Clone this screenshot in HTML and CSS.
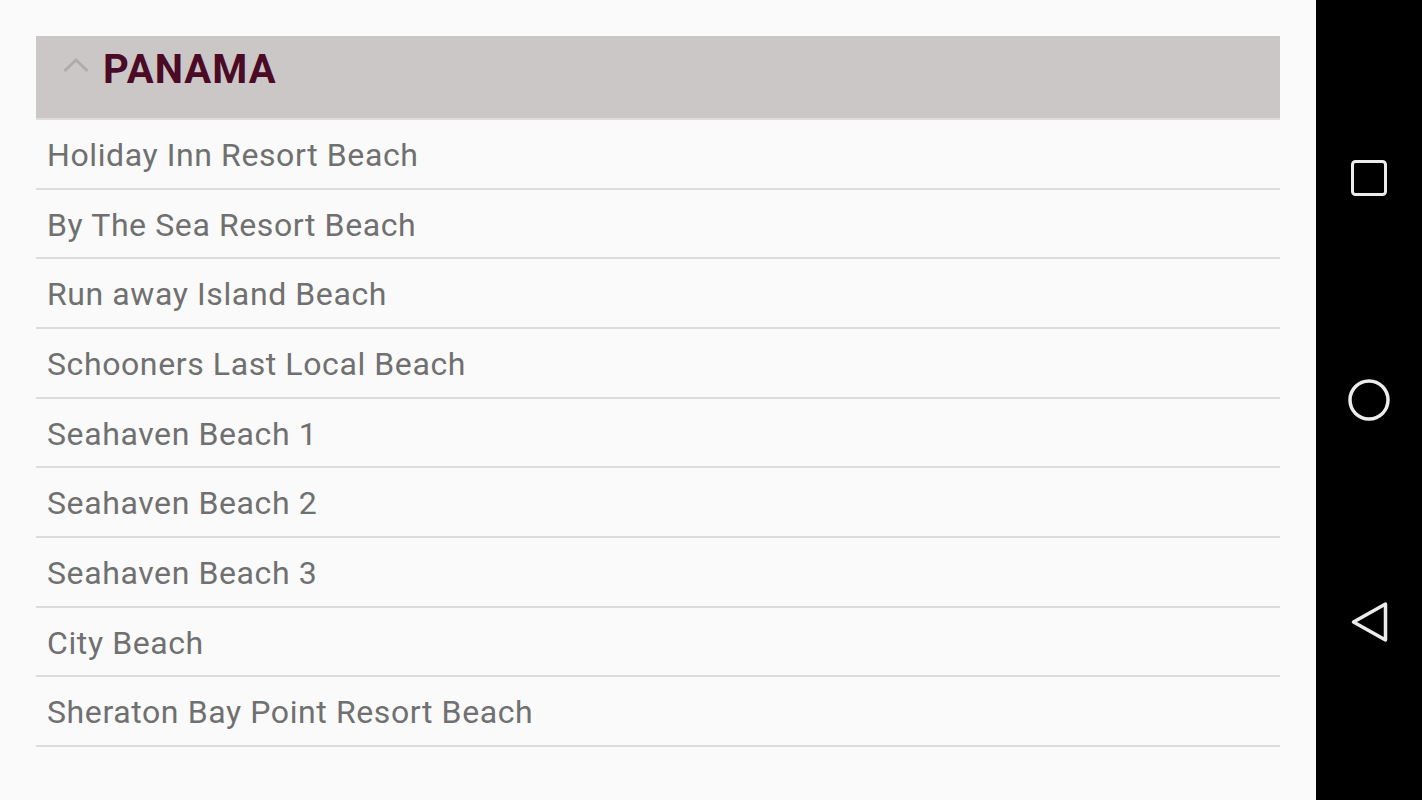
FILE: index.html
```html
<!DOCTYPE html>
<html>
<head>
<meta charset="utf-8">
<link rel="stylesheet" href="styles.css">
</head>
<body>
<div class="screen">
  <main class="content">
    <div class="group-header">
      <svg class="chevron" width="26" height="16" viewBox="0 0 26 16"><polyline points="1.5,14 13,3 24.5,14" fill="none" stroke="#afabaa" stroke-width="3"/></svg>
      <span class="group-title">PANAMA</span>
    </div>
    <ul class="list">
      <li class="row">Holiday Inn Resort Beach</li>
      <li class="row">By The Sea Resort Beach</li>
      <li class="row">Run away Island Beach</li>
      <li class="row">Schooners Last Local Beach</li>
      <li class="row">Seahaven Beach 1</li>
      <li class="row">Seahaven Beach 2</li>
      <li class="row">Seahaven Beach 3</li>
      <li class="row">City Beach</li>
      <li class="row">Sheraton Bay Point Resort Beach</li>
    </ul>
  </main>
  <nav class="navbar">
    <div class="nav-btn"><svg width="48" height="48" viewBox="0 0 48 48"><rect x="7.5" y="7.5" width="33" height="33" rx="3" fill="none" stroke="#ececec" stroke-width="3"/></svg></div>
    <div class="nav-btn"><svg width="48" height="48" viewBox="0 0 48 48"><circle cx="24" cy="24" r="19" fill="none" stroke="#ececec" stroke-width="3.5"/></svg></div>
    <div class="nav-btn"><svg width="48" height="48" viewBox="0 0 48 48"><polygon points="8.5,24 40.5,6 40.5,42" fill="none" stroke="#ececec" stroke-width="3.5" stroke-linejoin="round"/></svg></div>
  </nav>
</div>
</body>
</html>
```
FILE: styles.css
```css
html, body {
  margin: 0;
  padding: 0;
  background: #fafafa;
}
.screen {
  display: flex;
  width: 1422px;
  height: 800px;
  overflow: hidden;
}
.content {
  width: 1244px;
  padding: 36px 36px 0 36px;
  font-family: Roboto, "Liberation Sans", sans-serif;
}
.group-header {
  height: 68px;
  padding-top: 14px;
  background: #cbc7c6;
  border-bottom: 2px solid #dedcdc;
  display: flex;
  align-items: flex-start;
}
.chevron {
  margin-left: 27px;
  margin-top: 7px;
  flex: none;
}
.group-title {
  margin-left: 14px;
  font-size: 40px;
  line-height: 39px;
  font-weight: 700;
  letter-spacing: 1.1px;
  color: #4b0a25;
}
.list {
  list-style: none;
  margin: 0;
  padding: 0;
}
.row {
  height: 64.67px;
  padding-top: 3px;
  line-height: 64.67px;
  padding-left: 11px;
  border-bottom: 2px solid #dcdcdc;
  font-size: 32px;
  letter-spacing: 0.6px;
  color: #707070;
  white-space: nowrap;
}
.navbar {
  width: 106px;
  height: 800px;
  background: #000;
  display: flex;
  flex-direction: column;
  justify-content: space-evenly;
  align-items: center;
}
.nav-btn {
  height: 88px;
  display: flex;
  align-items: center;
  justify-content: center;
}
```
